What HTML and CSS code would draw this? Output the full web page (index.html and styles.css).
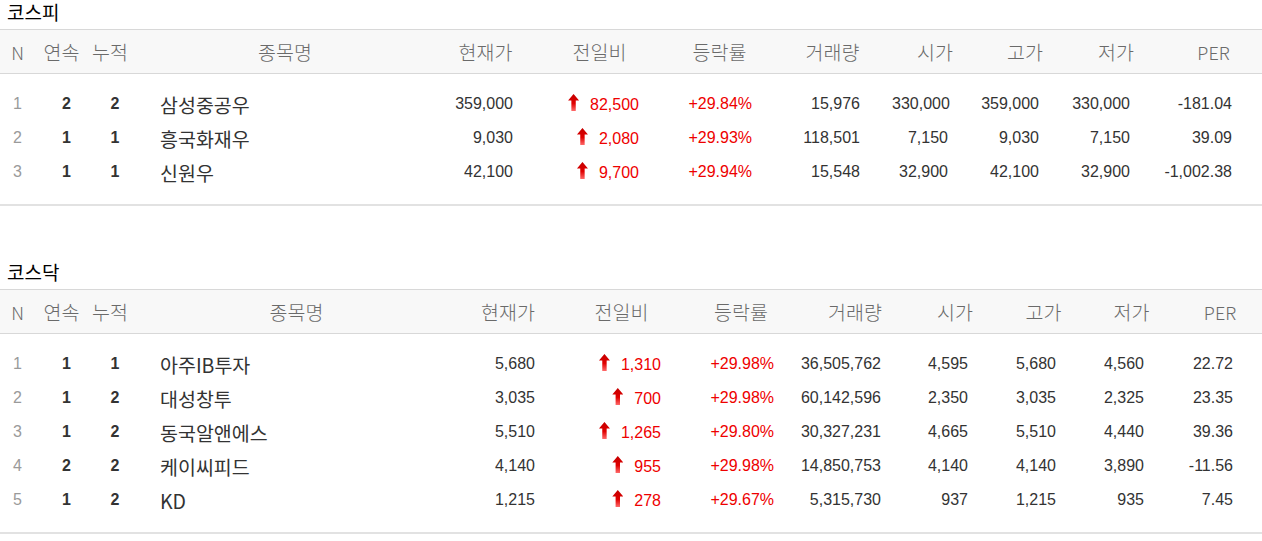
FILE: index.html
```html
<!DOCTYPE html>
<html lang="ko">
<head>
<meta charset="utf-8">
<title>상한가</title>
<link rel="stylesheet" href="styles.css">
</head>
<body>
<section class="market kospi">
  <h2 class="title">코스피</h2>
  <div class="row head">
    <div class="lat">N</div><div>연속</div><div>누적</div><div>종목명</div><div>현재가</div><div>전일비</div><div>등락률</div><div>거래량</div><div>시가</div><div>고가</div><div>저가</div><div class="per lat">PER</div>
  </div>
  <div class="body">
    <div class="row">
      <div class="no">1</div><div class="cnt">2</div><div class="cnt">2</div><div class="name">삼성중공우</div>
      <div class="num price">359,000</div><div class="num diff"><span class="up"></span>82,500</div><div class="num rate">+29.84%</div>
      <div class="num vol">15,976</div><div class="num open">330,000</div><div class="num high">359,000</div><div class="num low">330,000</div><div class="num per">-181.04</div>
    </div>
    <div class="row">
      <div class="no">2</div><div class="cnt">1</div><div class="cnt">1</div><div class="name">흥국화재우</div>
      <div class="num price">9,030</div><div class="num diff"><span class="up"></span>2,080</div><div class="num rate">+29.93%</div>
      <div class="num vol">118,501</div><div class="num open">7,150</div><div class="num high">9,030</div><div class="num low">7,150</div><div class="num per">39.09</div>
    </div>
    <div class="row">
      <div class="no">3</div><div class="cnt">1</div><div class="cnt">1</div><div class="name">신원우</div>
      <div class="num price">42,100</div><div class="num diff"><span class="up"></span>9,700</div><div class="num rate">+29.94%</div>
      <div class="num vol">15,548</div><div class="num open">32,900</div><div class="num high">42,100</div><div class="num low">32,900</div><div class="num per">-1,002.38</div>
    </div>
  </div>
</section>

<section class="market kosdaq">
  <h2 class="title">코스닥</h2>
  <div class="row head">
    <div class="lat">N</div><div>연속</div><div>누적</div><div>종목명</div><div>현재가</div><div>전일비</div><div>등락률</div><div>거래량</div><div>시가</div><div>고가</div><div>저가</div><div class="per lat">PER</div>
  </div>
  <div class="body">
    <div class="row">
      <div class="no">1</div><div class="cnt">1</div><div class="cnt">1</div><div class="name">아주IB투자</div>
      <div class="num price">5,680</div><div class="num diff"><span class="up"></span>1,310</div><div class="num rate">+29.98%</div>
      <div class="num vol">36,505,762</div><div class="num open">4,595</div><div class="num high">5,680</div><div class="num low">4,560</div><div class="num per">22.72</div>
    </div>
    <div class="row">
      <div class="no">2</div><div class="cnt">1</div><div class="cnt">2</div><div class="name">대성창투</div>
      <div class="num price">3,035</div><div class="num diff"><span class="up"></span>700</div><div class="num rate">+29.98%</div>
      <div class="num vol">60,142,596</div><div class="num open">2,350</div><div class="num high">3,035</div><div class="num low">2,325</div><div class="num per">23.35</div>
    </div>
    <div class="row">
      <div class="no">3</div><div class="cnt">1</div><div class="cnt">2</div><div class="name">동국알앤에스</div>
      <div class="num price">5,510</div><div class="num diff"><span class="up"></span>1,265</div><div class="num rate">+29.80%</div>
      <div class="num vol">30,327,231</div><div class="num open">4,665</div><div class="num high">5,510</div><div class="num low">4,440</div><div class="num per">39.36</div>
    </div>
    <div class="row">
      <div class="no">4</div><div class="cnt">2</div><div class="cnt">2</div><div class="name">케이씨피드</div>
      <div class="num price">4,140</div><div class="num diff"><span class="up"></span>955</div><div class="num rate">+29.98%</div>
      <div class="num vol">14,850,753</div><div class="num open">4,140</div><div class="num high">4,140</div><div class="num low">3,890</div><div class="num per">-11.56</div>
    </div>
    <div class="row">
      <div class="no">5</div><div class="cnt">1</div><div class="cnt">2</div><div class="name">KD</div>
      <div class="num price">1,215</div><div class="num diff"><span class="up"></span>278</div><div class="num rate">+29.67%</div>
      <div class="num vol">5,315,730</div><div class="num open">937</div><div class="num high">1,215</div><div class="num low">935</div><div class="num per">7.45</div>
    </div>
  </div>
</section>
</body>
</html>
```
FILE: styles.css
```css
html, body {
  margin: 0;
  padding: 0;
  background: #fff;
}
body {
  width: 1262px;
  font-family: "Liberation Sans", "Noto Sans CJK KR", sans-serif;
  font-size: 16px;
  color: #333;
}
.kospi { --cols: 35px 53px 44px 306px 95px 133px 107px 119px 86px 94px 88px 1fr; }
.kosdaq { --cols: 35px 53px 44px 329px 94px 133px 106px 122px 78px 99px 77px 1fr; margin-top: 54px; }

.title {
  margin: 0;
  height: 29px;
  line-height: 24px;
  padding-left: 7px;
  font-family: "Noto Sans CJK KR", sans-serif;
  font-size: 19px;
  font-weight: 400;
  color: #000;
  box-sizing: border-box;
}
.row {
  display: grid;
  grid-template-columns: var(--cols);
  align-items: center;
  height: 34px;
}
.head {
  height: 45px;
  box-sizing: border-box;
  border-top: 1px solid #d8d8d8;
  border-bottom: 1px solid #d8d8d8;
  background: #f8f8f8;
  font-family: "Noto Sans CJK KR", sans-serif;
  font-size: 19.5px;
  font-weight: 300;
  color: #6a6a6a;
}
.head > div { text-align: center; }
.head .lat { font-size: 18px; }
.kospi .head .per { padding-left: 5px; }
.kosdaq .head .per { padding-left: 8px; }

.body {
  padding: 13px 0 15px;
  border-bottom: 2px solid #e2e2e2;
}
.no { text-align: center; color: #9a9a9a; }
.cnt { text-align: center; padding-left: 10px; font-weight: 700; color: #333; }
.name {
  padding-left: 28px;
  font-family: "Noto Sans CJK KR", sans-serif;
  font-size: 19.5px;
  color: #333;
  white-space: nowrap;
}
.num { text-align: right; white-space: nowrap; }
.diff, .rate { color: #e00; }
.up {
  display: inline-block;
  width: 11px;
  height: 17px;
  margin-right: 11px;
  vertical-align: -1px;
  background: linear-gradient(#c40000, #e00000 55%, #ff6a6a);
  clip-path: polygon(50% 0, 100% 38%, 70% 38%, 70% 100%, 30% 100%, 30% 38%, 0 38%);
}

.kospi .price { padding-right: 20px; }
.kospi .diff { padding-right: 27px; }
.kospi .rate { padding-right: 21px; }
.kospi .vol { padding-right: 32px; }
.kospi .open { padding-right: 30px; }
.kospi .high { padding-right: 33px; }
.kospi .low { padding-right: 30px; }
.kospi .body .per { padding-right: 30px; }

.kosdaq .price { padding-right: 20px; }
.kosdaq .diff { padding-right: 27px; }
.kosdaq .rate { padding-right: 20px; }
.kosdaq .vol { padding-right: 35px; }
.kosdaq .open { padding-right: 26px; }
.kosdaq .high { padding-right: 37px; }
.kosdaq .low { padding-right: 26px; }
.kosdaq .body .per { padding-right: 29px; }
```
